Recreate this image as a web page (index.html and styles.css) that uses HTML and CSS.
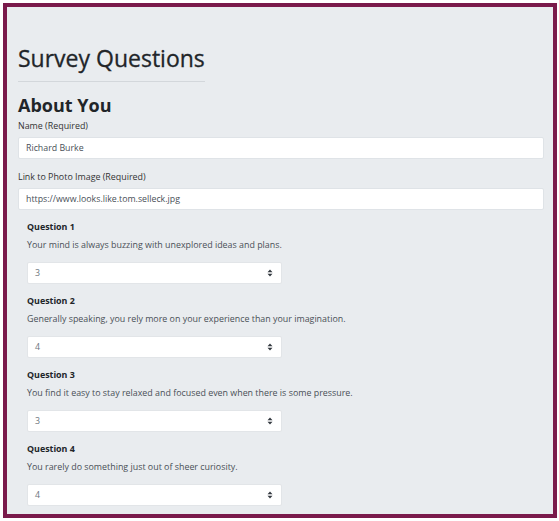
FILE: index.html
```html
<!DOCTYPE html>
<html>
<head>
<meta charset="utf-8">
<link rel="stylesheet" href="styles.css">
</head>
<body>
<div class="frame">
  <div class="title-wrap">
    <h1 class="title">Survey Questions</h1>
    <hr class="rule">
  </div>
  <h2 class="subtitle">About You</h2>
  <div class="field">
    <label class="label">Name (Required)</label>
    <div class="input">Richard Burke</div>
  </div>
  <div class="field">
    <label class="label">Link to Photo Image (Required)</label>
    <div class="input">https://www.looks.like.tom.selleck.jpg</div>
  </div>
  <div class="questions">
    <div class="question">
      <div class="q-title">Question 1</div>
      <div class="q-text">Your mind is always buzzing with unexplored ideas and plans.</div>
      <div class="select"><span>3</span><svg class="caret" width="6" height="8" viewBox="0 0 6 8"><path d="M3 0.5L5.5 3.3H0.5Z M3 7.5L5.5 4.7H0.5Z" fill="#343a40"/></svg></div>
    </div>
    <div class="question">
      <div class="q-title">Question 2</div>
      <div class="q-text">Generally speaking, you rely more on your experience than your imagination.</div>
      <div class="select"><span>4</span><svg class="caret" width="6" height="8" viewBox="0 0 6 8"><path d="M3 0.5L5.5 3.3H0.5Z M3 7.5L5.5 4.7H0.5Z" fill="#343a40"/></svg></div>
    </div>
    <div class="question">
      <div class="q-title">Question 3</div>
      <div class="q-text">You find it easy to stay relaxed and focused even when there is some pressure.</div>
      <div class="select"><span>3</span><svg class="caret" width="6" height="8" viewBox="0 0 6 8"><path d="M3 0.5L5.5 3.3H0.5Z M3 7.5L5.5 4.7H0.5Z" fill="#343a40"/></svg></div>
    </div>
    <div class="question">
      <div class="q-title">Question 4</div>
      <div class="q-text">You rarely do something just out of sheer curiosity.</div>
      <div class="select"><span>4</span><svg class="caret" width="6" height="8" viewBox="0 0 6 8"><path d="M3 0.5L5.5 3.3H0.5Z M3 7.5L5.5 4.7H0.5Z" fill="#343a40"/></svg></div>
    </div>
  </div>
</div>
</body>
</html>
```

FILE: styles.css
```css
html, body {
  margin: 0;
  padding: 0;
  background: #ffffff;
}
body {
  font-family: "Open Sans", "Noto Sans", sans-serif;
  color: #212529;
}
.frame {
  margin: 3px;
  border: 4px solid #7a1a4b;
  background: #e9ecef;
  padding: 0 9px 0 11px;
  box-sizing: content-box;
  overflow: hidden;
  width: 526px;
  height: 507px;
}
.title-wrap {
  display: inline-block;
  padding-top: 36px;
}
.title {
  margin: 0;
  font-size: 23px;
  font-weight: 500;
  line-height: 30px;
  color: #212529;
  -webkit-text-stroke: 0.3px #212529;
}
.rule {
  margin: 8px 0 0 0;
  border: 0;
  border-top: 1px solid #d3d7db;
}
.subtitle {
  margin: 6px 0 0 0;
  font-size: 18px;
  font-weight: 700;
  line-height: 24px;
}
.field {
  display: flex;
  flex-direction: column;
}
.label {
  font-size: 8.9px;
  line-height: 14px;
  margin-top: 2px;
  color: #333;
}
.input {
  margin-top: 4px;
  height: 20px;
  border: 1px solid #dfe3e7;
  border-radius: 2px;
  background: #fff;
  font-size: 8.8px;
  line-height: 20px;
  padding: 0 7px;
  color: #495057;
}
.field + .field .label {
  margin-top: 11px;
}
.questions {
  padding-left: 9px;
  padding-top: 10px;
}
.question {
  display: flex;
  flex-direction: column;
  margin-bottom: 10px;
}
.q-title {
  font-size: 8.9px;
  font-weight: 700;
  line-height: 14px;
  color: #212529;
}
.q-text {
  font-size: 8.9px;
  line-height: 14px;
  margin-top: 4px;
  color: #495057;
}
.select {
  margin-top: 10px;
  height: 20px;
  border: 1px solid #e2e5e8;
  border-radius: 2px;
  background: #fff;
  display: flex;
  align-items: center;
  justify-content: space-between;
  padding: 0 8px 0 7px;
  box-sizing: content-box;
  width: 238px;
  font-size: 8.8px;
  color: #6c757d;
}
.caret {
  display: block;
}
```
